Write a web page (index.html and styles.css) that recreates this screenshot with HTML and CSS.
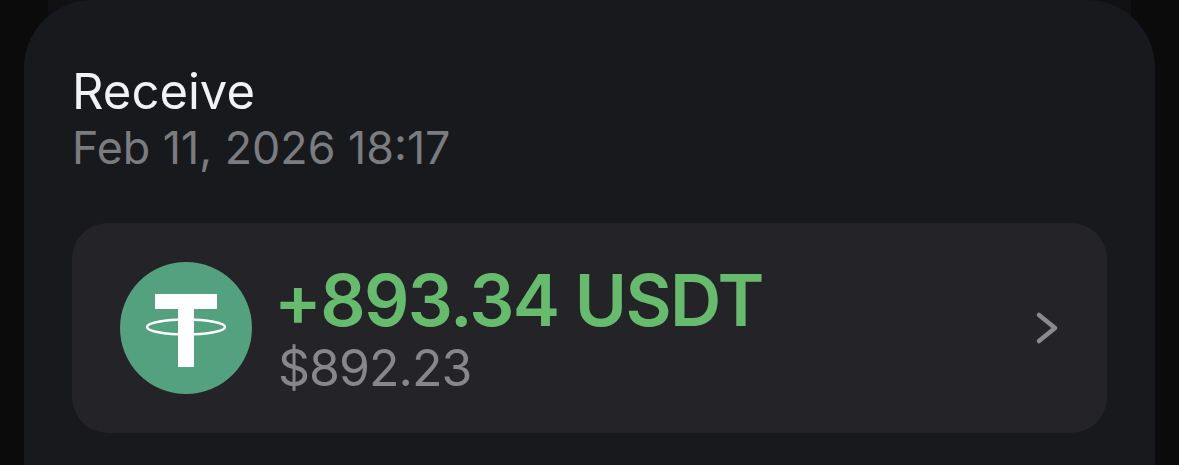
FILE: index.html
```html
<!DOCTYPE html>
<html lang="en">
<head>
    <meta charset="UTF-8">
    <title>Receive</title>
    <link rel="stylesheet" href="styles.css">
</head>
<body>
    <div class="sheet">
        <h1 class="title">Receive</h1>
        <p class="date">Feb 11, 2026 18:17</p>
        <div class="card">
            <svg class="coin" viewBox="0 0 132 132">
                <circle cx="66" cy="66" r="66" fill="#53a17f"/>
                <ellipse cx="66" cy="65" rx="39" ry="7.5" fill="none" stroke="#fff" stroke-width="2.5"/>
                <path d="M35 32h62v15H74v58H58V47H35z" fill="#fff"/>
            </svg>
            <div class="amounts">
                <div class="amount">+893.34 USDT</div>
                <div class="fiat">$892.23</div>
            </div>
            <svg class="chevron" viewBox="0 0 24 34">
                <path d="M4 4l16 13L4 30" fill="none" stroke="#8b8b8f" stroke-width="4.5" stroke-linecap="round" stroke-linejoin="round"/>
            </svg>
        </div>
    </div>
</body>
</html>
```

FILE: styles.css
```css
html, body {
    height: 100%;
}

body {
    margin: 0;
    padding: 0 24px;
    box-sizing: border-box;
    background: linear-gradient(90deg, #0b0b0c 48px, #111113 48px, #111113 1131px, #0b0b0c 1131px);
    overflow: hidden;
    font-family: Inter, "Liberation Sans", sans-serif;
}

/* big rounded panel */
.sheet {
    box-sizing: border-box;
    height: 100%;
    padding: 65px 48px 0;
    background-color: #18191c;
    border-radius: 68px 68px 0 0;
}

.title {
    margin: 0;
    font-size: 49px;
    font-weight: 400;
    line-height: 54px;
    color: #f2f2f4;
}

.date {
    margin: 4px 0 0;
    font-size: 44.8px;
    font-weight: 400;
    line-height: 50px;
    color: #7b7c80;
}

/* transaction row */
.card {
    display: flex;
    align-items: center;
    height: 210px;
    margin-top: 50px;
    padding: 0 48px;
    background-color: #242428;
    border-radius: 36px;
}

.coin {
    width: 132px;
    height: 132px;
    flex-shrink: 0;
}

.amounts {
    flex: 1;
    margin-left: 26px;
    padding-top: 3px;
}

.amount {
    margin-left: -4px;
    font-size: 71px;
    font-weight: 600;
    letter-spacing: -1.6px;
    line-height: 76px;
    color: #66bb6d;
}

.fiat {
    font-size: 50px;
    letter-spacing: -1px;
    line-height: 60px;
    color: #86868b;
}

.chevron {
    width: 24px;
    height: 34px;
}
```
